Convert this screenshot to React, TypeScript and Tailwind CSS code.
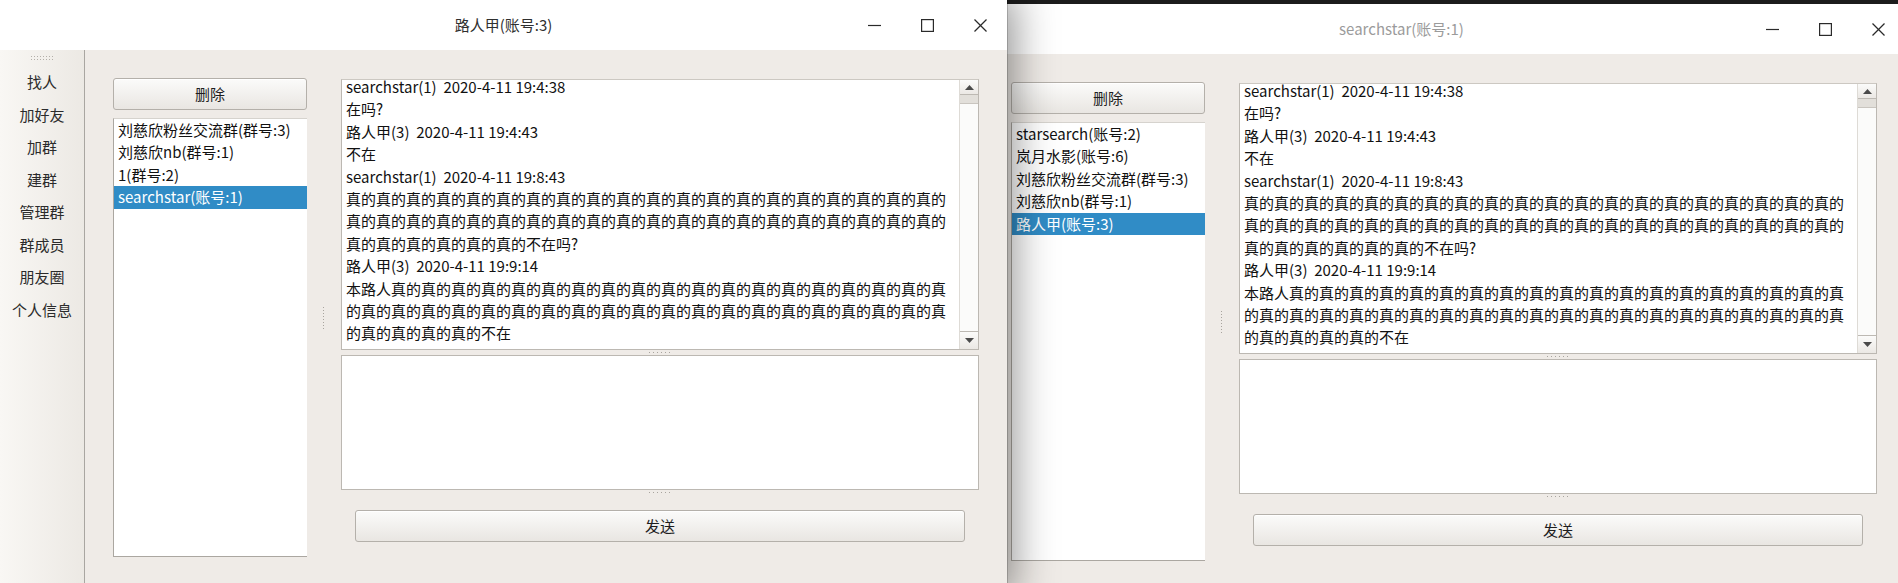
import React from 'react';

const FONT = "font-['Noto_Sans_CJK_SC','Noto_Sans',sans-serif]";

const chatLines = [
  'searchstar(1)  2020-4-11 19:4:38',
  '在吗?',
  '路人甲(3)  2020-4-11 19:4:43',
  '不在',
  'searchstar(1)  2020-4-11 19:8:43',
  '真的'.repeat(20),
  '真的'.repeat(20),
  '真的'.repeat(6) + '不在吗?',
  '路人甲(3)  2020-4-11 19:9:14',
  '本路人' + '真的'.repeat(18) + '真',
  '的真'.repeat(20),
  '的真'.repeat(4) + '的不在',
];

const menu = ['找人', '加好友', '加群', '建群', '管理群', '群成员', '朋友圈', '个人信息'];

function DotsH() {
  return (
    <svg width="22" height="2" viewBox="0 0 22 2">
      {[0, 4, 8, 12, 16, 20].map((x) => (
        <rect key={x} x={x} y={0} width={1} height={1} fill="#a8a49e" />
      ))}
    </svg>
  );
}

function DotsV() {
  return (
    <svg width="2" height="22" viewBox="0 0 2 22">
      {[0, 3, 6, 9, 12, 15, 18, 21].map((y) => (
        <rect key={y} x={0} y={y} width={1} height={1} fill="#a8a49e" />
      ))}
    </svg>
  );
}

function QtButton({ label, className }: { label: string; className?: string }) {
  return (
    <div
      className={`flex items-center justify-center rounded-[3px] border border-[#b4b0aa] bg-gradient-to-b from-[#fbfbfa] to-[#e9e6e2] text-[15px] text-[#1e1e1e] shadow-[inset_0_1px_0_#ffffff] ${className ?? ''}`}
    >
      {label}
    </div>
  );
}

function TitleBar({ title, active }: { title: string; active: boolean }) {
  return (
    <div className="relative flex h-[50px] shrink-0 items-center justify-center bg-white">
      <span className={`text-[15px] ${active ? 'text-[#2f2f2f]' : 'text-[#9b9b9b]'}`}>{title}</span>
      <div className="absolute right-0 top-0 flex h-full items-center">
        <div className="flex w-[53px] justify-center">
          <svg width="13" height="13" viewBox="0 0 13 13">
            <line x1="0" y1="6.5" x2="13" y2="6.5" stroke="#2a2a2a" strokeWidth="1.2" />
          </svg>
        </div>
        <div className="flex w-[53px] justify-center">
          <svg width="13" height="13" viewBox="0 0 13 13">
            <rect x="0.6" y="0.6" width="11.8" height="11.8" fill="none" stroke="#2a2a2a" strokeWidth="1.2" />
          </svg>
        </div>
        <div className="flex w-[53px] justify-center">
          <svg width="13" height="13" viewBox="0 0 13 13">
            <line x1="0.5" y1="0.5" x2="12.5" y2="12.5" stroke="#2a2a2a" strokeWidth="1.2" />
            <line x1="12.5" y1="0.5" x2="0.5" y2="12.5" stroke="#2a2a2a" strokeWidth="1.2" />
          </svg>
        </div>
      </div>
    </div>
  );
}

function Sidebar() {
  return (
    <div className="flex w-[85px] shrink-0 flex-col border-r border-[#a9a6a1] bg-gradient-to-r from-[#f9f7f4] to-[#ece9e4]">
      <div className="flex h-[16px] items-center justify-center">
        <svg width="22" height="5" viewBox="0 0 22 5">
          {[0, 3, 6, 9, 12, 15, 18, 21].map((x) => (
            <g key={x}>
              <rect x={x} y={0} width={1} height={1} fill="#b3afa9" />
              <rect x={x} y={3} width={1} height={1} fill="#b3afa9" />
            </g>
          ))}
        </svg>
      </div>
      {menu.map((m) => (
        <div key={m} className="flex h-[32.5px] items-center justify-center text-[15px] text-[#2b2b2b]">
          {m}
        </div>
      ))}
    </div>
  );
}

function ScrollBar() {
  return (
    <div className="flex w-[19px] shrink-0 flex-col border-l border-[#dedbd6] bg-[#f4f2ef]">
      <div className="flex h-[15px] items-center justify-center border-b border-[#bdb9b3] bg-gradient-to-b from-[#fbfbfa] to-[#ebe8e4]">
        <svg width="9" height="5" viewBox="0 0 9 5">
          <polygon points="4.5,0 9,5 0,5" fill="#4a4a4a" />
        </svg>
      </div>
      <div className="h-[8px] bg-[#e2dfda]" />
      <div className="flex-1 border-t border-[#c9c5bf] bg-[#fbfbfa]" />
      <div className="flex h-[18px] items-center justify-center border-t border-[#bdb9b3] bg-gradient-to-b from-[#fbfbfa] to-[#ebe8e4]">
        <svg width="9" height="5" viewBox="0 0 9 5">
          <polygon points="0,0 9,0 4.5,5" fill="#4a4a4a" />
        </svg>
      </div>
    </div>
  );
}

function ChatWindow({
  title,
  active,
  contacts,
  selected,
}: {
  title: string;
  active: boolean;
  contacts: string[];
  selected: number;
}) {
  return (
    <div className="flex h-[590px] w-[1007px] flex-col bg-[#efebe7]">
      <TitleBar title={title} active={active} />
      <div className="flex min-h-0 flex-1">
        <Sidebar />
        <div className="flex pl-[28px] pt-[28px]">
          {/* contacts */}
          <div className="flex h-[479px] w-[194px] flex-col">
            <QtButton label="删除" className="h-[32px]" />
            <div className="mt-[8px] h-[439px] border-b border-l border-t border-b-[#aba7a1] border-l-[#aba7a1] border-t-[#d6d3ce] bg-white">
              {contacts.map((c, i) => (
                <div
                  key={c}
                  className={`h-[22.4px] whitespace-nowrap pl-[4px] text-[15px] leading-[22.4px] ${
                    i === selected ? 'bg-[#308cc6] text-white' : 'text-[#111]'
                  }`}
                >
                  {c}
                </div>
              ))}
            </div>
          </div>

          {/* splitter */}
          <div className="flex h-[479px] w-[34px] items-center justify-center">
            <DotsV />
          </div>

          {/* chat */}
          <div className="flex w-[638px] flex-col pt-[1px]">
            <div className="flex h-[271px] overflow-hidden border border-[#bcb8b2] border-t-[#ccc8c2] bg-white">
              <div className="min-w-0 flex-1 overflow-hidden pl-[4px]">
                <div className="-mt-[4px]">
                  {chatLines.map((l, i) => (
                    <div key={i} className="whitespace-pre text-[15px] leading-[22.4px] text-[#111]">
                      {l}
                    </div>
                  ))}
                </div>
              </div>
              <ScrollBar />
            </div>
            <div className="flex h-[5px] items-center justify-center">
              <DotsH />
            </div>
            <div className="h-[135px] border border-[#bcb8b2] bg-white" />
            <div className="flex h-[20px] justify-center pt-[2px]">
              <DotsH />
            </div>
            <QtButton label="发送" className="mx-[14px] h-[32px]" />
          </div>
        </div>
      </div>
    </div>
  );
}

export default function App() {
  return (
    <div className={`relative h-[583px] w-[1898px] overflow-hidden bg-[#1c1c1c] ${FONT}`}>
      <div className="absolute left-[898px] top-[4px]">
        <ChatWindow
          title="searchstar(账号:1)"
          active={false}
          contacts={['starsearch(账号:2)', '岚月水影(账号:6)', '刘慈欣粉丝交流群(群号:3)', '刘慈欣nb(群号:1)', '路人甲(账号:3)']}
          selected={4}
        />
      </div>
      <div className="absolute left-0 top-0 z-10 shadow-[0_0_0_1px_rgba(0,0,0,0.18),0_0_40px_6px_rgba(0,0,0,0.45)]">
        <ChatWindow
          title="路人甲(账号:3)"
          active
          contacts={['刘慈欣粉丝交流群(群号:3)', '刘慈欣nb(群号:1)', '1(群号:2)', 'searchstar(账号:1)']}
          selected={3}
        />
      </div>
    </div>
  );
}
